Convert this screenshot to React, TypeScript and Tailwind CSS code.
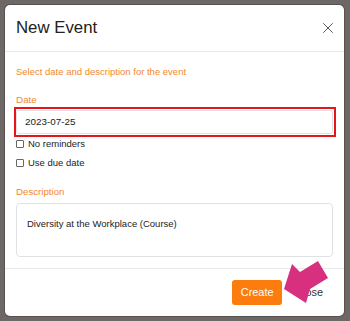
import { X } from 'lucide-react'

function Checkbox({ label }: { label: string }) {
  return (
    <label className="flex items-center gap-[4px] leading-[14px] text-[9.5px] text-[#222]">
      <span className="block w-[8px] h-[8px] border border-[#666] rounded-[1px] bg-white" />
      <span>{label}</span>
    </label>
  )
}

export default function App() {
  return (
    <div className="relative w-[350px] h-[321px] overflow-hidden bg-[#6d6866] pl-[5px] pt-[5px] font-['Liberation_Sans',Arial,sans-serif]">
      {/* Modal */}
      <div className="w-[339px] h-[311px] bg-white rounded-[5px] shadow-[0_0_0_1px_#57514f] flex flex-col">
        {/* Header */}
        <div className="h-[47px] shrink-0 flex items-center justify-between pl-[11px] pr-[7px] border-b border-[#e6e8ea]">
          <h2 className="text-[16.8px] text-[#222] leading-none">New Event</h2>
          <X size={18} strokeWidth={1.3} className="text-[#555]" />
        </div>

        {/* Body */}
        <div className="px-[11px] pt-[14px] pb-[11px] border-b border-[#e6e8ea]">
          <p className="text-[9.5px] leading-[12px] text-[#f2892c]">
            Select date and description for the event
          </p>
          <div className="mt-[16px] text-[9.9px] leading-[12px] text-[#f2892c]">Date</div>
          <div className="mt-[1px] -ml-[2px] w-[322px] h-[30px] border-2 border-[#e8141b] py-[1px] pr-[1px]">
            <div className="h-full border border-[#dfe2e5] rounded-[3px] pl-[8px] flex items-center text-[9.9px] text-[#222]">
              2023-07-25
            </div>
          </div>
          <div className="mt-[0px]">
            <Checkbox label="No reminders" />
          </div>
          <div className="mt-[5px]">
            <Checkbox label="Use due date" />
          </div>
          <div className="mt-[16px] text-[9.7px] leading-[12px] text-[#f2892c]">Description</div>
          <div className="mt-[5px] w-[317px] h-[54px] border border-[#dfe2e5] rounded-[4px] pl-[10px] pt-[14px] text-[9.5px] leading-[12px] text-[#222]">
            Diversity at the Workplace (Course)
          </div>
        </div>

        {/* Footer */}
        <div className="flex-1 flex items-center justify-end gap-[13px] pr-[21px]">
          <button className="w-[50px] h-[25px] rounded-[3px] bg-[#fc7d0d] text-white text-[10.9px]">
            Create
          </button>
          <span className="text-[10.9px] text-[#333]">Close</span>
        </div>
      </div>

      {/* Annotation arrow */}
      <svg
        className="absolute left-0 top-0 pointer-events-none"
        width="350"
        height="321"
        viewBox="0 0 350 321"
      >
        <polygon
          points="284,289 292,264 300,272 318,261 328,278 310,289 306,303"
          fill="#d6307e"
        />
      </svg>
    </div>
  )
}
